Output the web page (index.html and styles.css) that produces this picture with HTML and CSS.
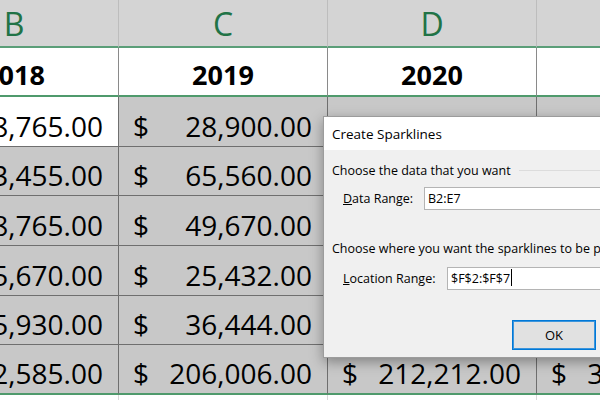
FILE: index.html
```html
<!DOCTYPE html>
<html lang="en">
<head>
    <meta charset="UTF-8">
    <meta name="viewport" content="width=device-width, initial-scale=1.0">
    <title>Create Sparklines</title>
    <link rel="stylesheet" href="styles.css">
</head>
<body>
    <div class="sheet">
        <div class="grid">
            <div class="col-head">B</div>
            <div class="col-head">C</div>
            <div class="col-head">D</div>
            <div class="col-head">E</div>

            <div class="year">2018</div>
            <div class="year">2019</div>
            <div class="year">2020</div>
            <div class="year">2021</div>

            <div class="cell active"><span>$</span><span>18,765.00</span></div>
            <div class="cell"><span>$</span><span>28,900.00</span></div>
            <div class="cell"><span>$</span><span>45,300.00</span></div>
            <div class="cell"><span>$</span><span>61,250.00</span></div>

            <div class="cell"><span>$</span><span>23,455.00</span></div>
            <div class="cell"><span>$</span><span>65,560.00</span></div>
            <div class="cell"><span>$</span><span>38,912.00</span></div>
            <div class="cell"><span>$</span><span>72,480.00</span></div>

            <div class="cell"><span>$</span><span>38,765.00</span></div>
            <div class="cell"><span>$</span><span>49,670.00</span></div>
            <div class="cell"><span>$</span><span>52,000.00</span></div>
            <div class="cell"><span>$</span><span>58,900.00</span></div>

            <div class="cell"><span>$</span><span>15,670.00</span></div>
            <div class="cell"><span>$</span><span>25,432.00</span></div>
            <div class="cell"><span>$</span><span>41,500.00</span></div>
            <div class="cell"><span>$</span><span>64,110.00</span></div>

            <div class="cell"><span>$</span><span>25,930.00</span></div>
            <div class="cell"><span>$</span><span>36,444.00</span></div>
            <div class="cell"><span>$</span><span>34,500.00</span></div>
            <div class="cell"><span>$</span><span>49,760.00</span></div>

            <div class="cell total"><span>$</span><span>122,585.00</span></div>
            <div class="cell total"><span>$</span><span>206,006.00</span></div>
            <div class="cell total"><span>$</span><span>212,212.00</span></div>
            <div class="cell total"><span>$</span><span>306,500.00</span></div>

            <div class="empty"></div>
            <div class="empty"></div>
            <div class="empty"></div>
            <div class="empty"></div>
        </div>

        <div class="dialog">
            <div class="dialog-title">Create Sparklines</div>
            <div class="dialog-body">
                <div class="group-head"><span>Choose the data that you want</span></div>
                <div class="field">
                    <label class="data-label"><u>D</u>ata Range:</label>
                    <div class="text-box">B2:E7</div>
                </div>
                <div class="group-head second"><span>Choose where you want the sparklines to be placed</span></div>
                <div class="field">
                    <label class="loc-label"><u>L</u>ocation Range:</label>
                    <div class="text-box">$F$2:$F$7<span class="caret"></span></div>
                </div>
                <button class="ok-btn">OK</button>
            </div>
        </div>
    </div>
</body>
</html>
```

FILE: styles.css
```css
body {
    margin: 0;
    overflow: hidden;
    background: #fff;
}

.sheet {
    position: relative;
    width: 600px;
    height: 400px;
    overflow: hidden;
}

.grid {
    display: grid;
    grid-template-columns: repeat(4, 209px);
    grid-template-rows: 48px 49px 50px 49px 50px 50px 49px 50px 20px;
    margin-left: -90px;
    font-family: "Open Sans", "Liberation Sans", sans-serif;
}

.col-head {
    background: #d4d4d4;
    border-right: 1px solid #bdbdbd;
    border-bottom: 2px solid #5b9e78;
    color: #217346;
    font-size: 32px;
    text-align: center;
    line-height: 48px;
    box-sizing: border-box;
}

.year {
    background: #fff;
    border-right: 1px solid #8a8a8a;
    border-bottom: 2px solid #4f9a6c;
    font-size: 27px;
    font-weight: bold;
    display: flex;
    align-items: flex-end;
    justify-content: center;
    padding-bottom: 6px;
    line-height: 28px;
    box-sizing: border-box;
}

.cell {
    background: #c8c8c8;
    border-right: 1px solid #6f6f6f;
    border-bottom: 1px solid #6f6f6f;
    font-size: 28px;
    line-height: 28px;
    display: flex;
    justify-content: space-between;
    align-items: flex-end;
    padding: 0 15px 6px 14px;
    box-sizing: border-box;
}

.cell.active {
    background: #fff;
}

.cell.total {
    border-bottom: 2px solid #4f9a6c;
}

.empty {
    border-right: 1px solid #d9d9d9;
}

.dialog {
    position: absolute;
    left: 323px;
    top: 116px;
    width: 420px;
    height: 242px;
    box-sizing: border-box;
    border: 1px solid #9c9c9c;
    background: #f0f0f0;
    box-shadow: 0 4px 12px rgba(0, 0, 0, 0.35);
    font-family: "Open Sans", "Noto Sans", sans-serif;
    font-size: 12.5px;
    color: #000;
}

.dialog-title {
    height: 33px;
    background: #fff;
    padding-left: 8px;
    line-height: 34px;
    font-size: 13.5px;
}

.dialog-body {
    padding: 10px 0 0 8px;
}

.group-head {
    display: flex;
    align-items: center;
    height: 20px;
    white-space: nowrap;
}

.group-head::after {
    content: "";
    flex: 1;
    margin-left: 8px;
    border-top: 1px solid #dcdcdc;
}

.group-head.second {
    margin-top: 28px;
}

.field {
    display: flex;
    align-items: center;
    margin-top: 7px;
    padding-left: 11px;
    white-space: nowrap;
}

.field + .group-head + .field {
    margin-top: 9px;
}

.data-label {
    width: 81px;
}

.loc-label {
    width: 104px;
}

.text-box {
    flex: 1;
    height: 23px;
    box-sizing: border-box;
    border: 1px solid #b4b4b4;
    background: #fff;
    padding-left: 3px;
    line-height: 21px;
}

.caret {
    display: inline-block;
    width: 1px;
    height: 17px;
    background: #000;
    vertical-align: -3px;
    margin-left: 1px;
}

.ok-btn {
    display: block;
    margin: 30px 0 0 180px;
    width: 84px;
    height: 30px;
    border: 1px solid #0078d7;
    box-shadow: inset 0 0 0 1px #3c95dc;
    background: #e1e1e1;
    font-family: "Open Sans", "Noto Sans", sans-serif;
    font-size: 13px;
    color: #000;
}
```
